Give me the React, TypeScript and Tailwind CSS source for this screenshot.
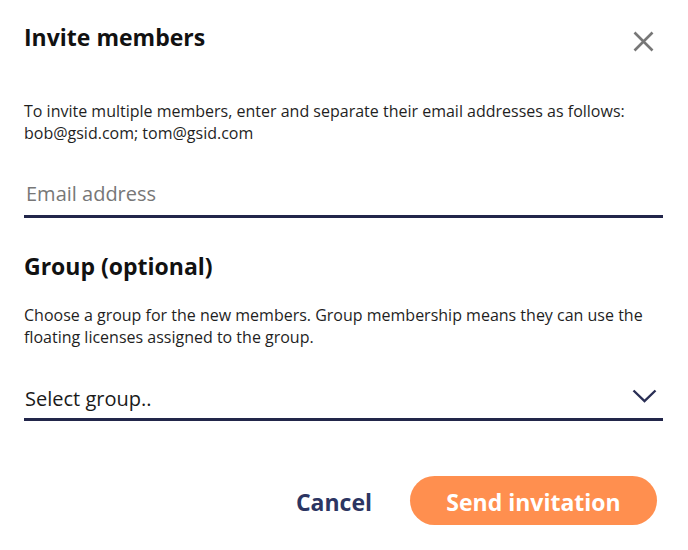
export default function App() {
  return (
    <div className="w-[688px] h-[550px] bg-white font-['Open_Sans',sans-serif] text-[#1f1f1f]">
      <div className="flex flex-col pl-6 pr-[25px] pt-[22px]">
        <div className="flex items-start justify-between">
          <h1 className="text-[23px] leading-[30px] font-bold text-[#111]">Invite members</h1>
          <button className="mt-[9px] mr-[9px] text-[#777]" aria-label="Close">
            <svg width="21" height="21" viewBox="0 0 21 21" fill="none" stroke="currentColor" strokeWidth="2.6">
              <path d="M1.5 1.5 L19.5 19.5 M19.5 1.5 L1.5 19.5" />
            </svg>
          </button>
        </div>

        <p className="mt-[48px] text-[16px] leading-[22px]">
          To invite multiple members, enter and separate their email addresses as follows:
          <br />
          bob@gsid.com; tom@gsid.com
        </p>

        <input
          className="mt-[36px] w-full pl-[2px] pb-[7px] text-[20px] leading-[28px] text-[#222] placeholder:text-[#777] border-b-[3px] border-[#22264a] outline-none"
          placeholder="Email address"
        />

        <h2 className="mt-[33px] text-[23px] leading-[30px] font-bold text-[#111]">Group (optional)</h2>

        <p className="mt-[23px] text-[16px] leading-[22px]">
          Choose a group for the new members. Group membership means they can use the floating licenses assigned to the group.
        </p>

        <div className="mt-[37px] flex items-center justify-between border-b-[3px] border-[#22264a] pb-[5px]">
          <span className="pl-[1px] text-[20px] leading-[28px] text-[#1a1a1a]">Select group..</span>
          <svg className="mr-[6px] -mt-[6px]" width="25" height="14" viewBox="0 0 25 14" fill="none" stroke="#2a2f55" strokeWidth="2.4">
            <path d="M1.5 1.5 L12.5 12 L23.5 1.5" />
          </svg>
        </div>

        <div className="mt-[55px] flex items-center justify-end gap-[38px] pr-[6px]">
          <button className="pt-[3px] text-[23px] font-bold text-[#2c3562]">Cancel</button>
          <button className="h-[49px] w-[247px] rounded-full bg-[#ff8f4f] pt-[3px] text-[23px] font-bold text-white">
            Send invitation
          </button>
        </div>
      </div>
    </div>
  )
}
